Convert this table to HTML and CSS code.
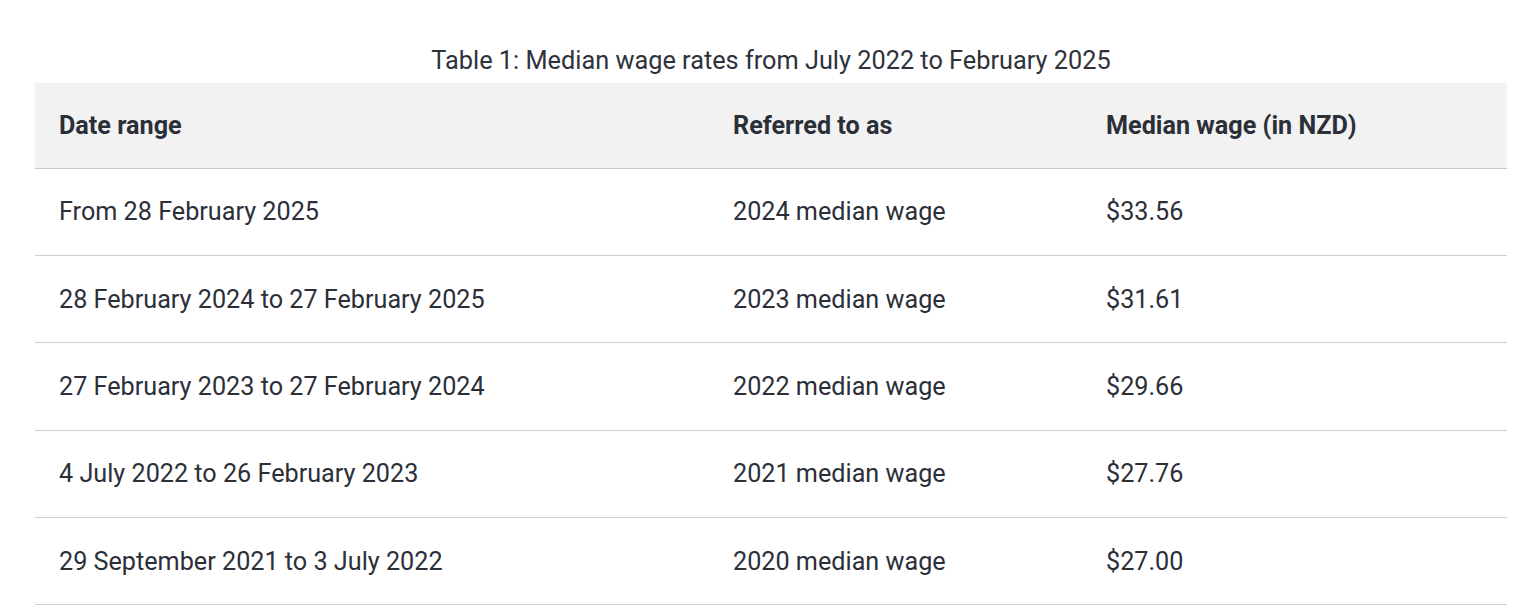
FILE: index.html
```html
<!DOCTYPE html>
<html lang="en">
<head>
<meta charset="utf-8">
<title>Median wage rates</title>
<link rel="stylesheet" href="styles.css">
</head>
<body>
<div class="wrap">
  <table class="wage-table">
    <caption>Table 1: Median wage rates from July 2022 to February 2025</caption>
    <colgroup>
      <col class="c1">
      <col class="c2">
      <col class="c3">
    </colgroup>
    <thead>
      <tr><th>Date range</th><th>Referred to as</th><th>Median wage (in NZD)</th></tr>
    </thead>
    <tbody>
      <tr><td>From 28 February 2025</td><td>2024 median wage</td><td>$33.56</td></tr>
      <tr><td>28 February 2024 to 27 February 2025</td><td>2023 median wage</td><td>$31.61</td></tr>
      <tr><td>27 February 2023 to 27 February 2024</td><td>2022 median wage</td><td>$29.66</td></tr>
      <tr><td>4 July 2022 to 26 February 2023</td><td>2021 median wage</td><td>$27.76</td></tr>
      <tr><td>29 September 2021 to 3 July 2022</td><td>2020 median wage</td><td>$27.00</td></tr>
    </tbody>
  </table>
</div>
</body>
</html>
```

FILE: styles.css
```css
html, body {
  margin: 0;
  padding: 0;
  background: #ffffff;
}
body {
  font-family: Roboto, "Noto Sans", sans-serif;
  color: #2b2f38;
}
.wrap {
  padding: 0 27px 0 35px;
}
.wage-table {
  width: 1472px;
  border-collapse: collapse;
  table-layout: fixed;
}
.wage-table caption {
  caption-side: top;
  font-size: 25.3px;
  line-height: 30px;
  padding: 46px 0 7px;
  text-align: center;
  color: #2e323b;
}
.c1 { width: 674px; }
.c2 { width: 373px; }
.c3 { width: 425px; }
.wage-table thead tr {
  background: #f2f2f2;
}
.wage-table th {
  text-align: left;
  font-weight: 700;
  font-size: 25.2px;
  height: 85px;
  padding: 0 24px;
  box-sizing: border-box;
  border-bottom: 1px solid #c8c8c8;
  vertical-align: middle;
}
.wage-table td {
  font-size: 25.2px;
  height: 87.4px;
  padding: 0 24px;
  box-sizing: border-box;
  border-bottom: 1px solid #cfcfcf;
  vertical-align: middle;
}
```
